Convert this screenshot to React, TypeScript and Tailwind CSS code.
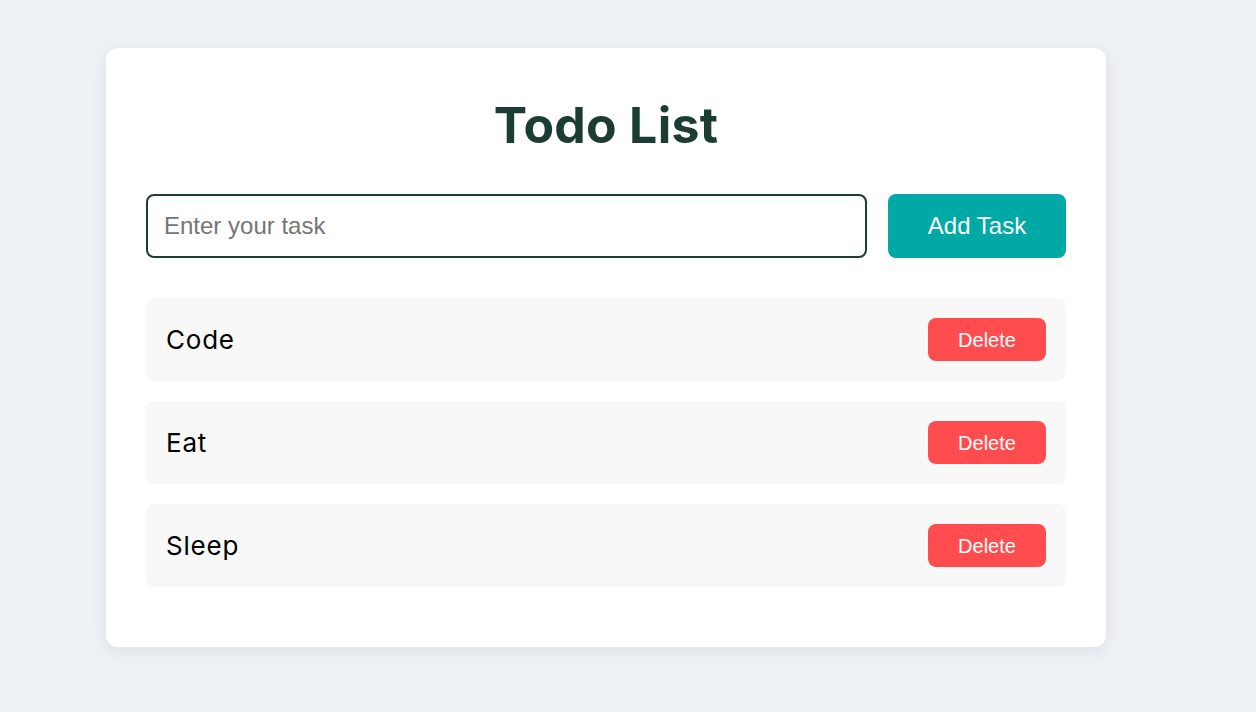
import { useState } from "react";

const tasks = ["Code", "Eat", "Sleep"];

export default function App() {
    const [items, setItems] = useState(tasks);
    const [text, setText] = useState("");

    return (
        <div className="min-h-screen bg-[#eef2f7] pt-12 pl-[106px]">
            <div className="w-[1000px] rounded-xl bg-white px-10 pt-[50px] pb-[60px] shadow-[0_4px_20px_rgba(0,0,0,0.08)]">
                <h1 className="text-center font-['Inter',sans-serif] text-[50px] font-bold leading-[54px] tracking-[0.005em] text-[#1b3d36]">
                    Todo List
                </h1>

                <div className="mt-[42px] flex gap-[21px]">
                    <input
                        value={text}
                        onChange={(e) => setText(e.target.value)}
                        placeholder="Enter your task"
                        className="h-[64px] flex-1 rounded-lg border-2 border-[#1b3d36] px-4 font-['Liberation_Sans',Arial,sans-serif] text-[24px] text-black outline-none placeholder:text-[#757575]"
                    />
                    <button
                        onClick={() => {
                            if (text.trim()) setItems([...items, text.trim()]);
                            setText("");
                        }}
                        className="h-[64px] w-[178px] rounded-lg bg-[#00a8a6] font-['Liberation_Sans',Arial,sans-serif] text-[24px] text-white"
                    >
                        Add Task
                    </button>
                </div>

                <ul className="mt-10 flex flex-col gap-5">
                    {items.map((item, i) => (
                        <li
                            key={i}
                            className="flex h-[83px] items-center justify-between rounded-lg bg-[#f8f8f8] px-5"
                        >
                            <span className="font-['Inter',sans-serif] text-[26px] tracking-[0.03em] text-black">{item}</span>
                            <button
                                onClick={() => setItems(items.filter((_, j) => j !== i))}
                                className="h-[43px] w-[118px] rounded-lg bg-[#ff4d4f] font-['Liberation_Sans',Arial,sans-serif] text-[20px] text-white"
                            >
                                Delete
                            </button>
                        </li>
                    ))}
                </ul>
            </div>
        </div>
    );
}
